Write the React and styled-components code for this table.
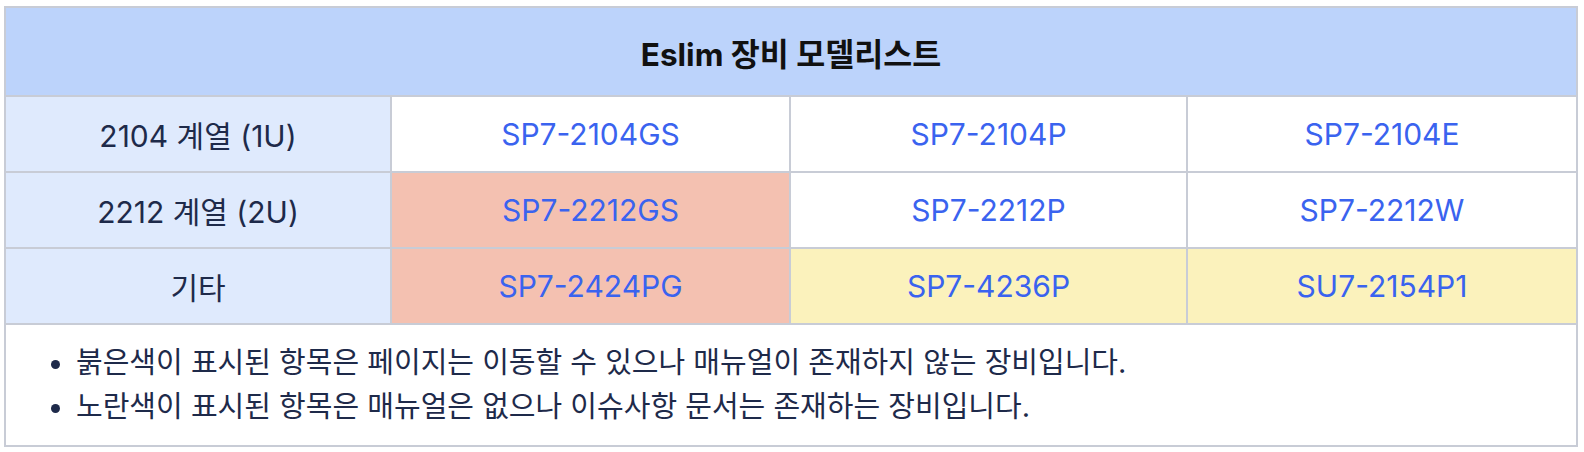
import React from "react";
import styled, { createGlobalStyle } from "styled-components";

const GlobalStyle = createGlobalStyle`
  body {
    margin: 0;
    background: #fff;
    font-family: Inter, "Noto Sans CJK KR", sans-serif;
    color: #1e2a4a;
  }
`;

const Page = styled.div`
  padding: 6px 0 0 4px;
`;

const Table = styled.table`
  width: 1572px;
  border-collapse: collapse;
  table-layout: fixed;
  border: 2px solid #c8ccd6;
`;

const Th = styled.th`
  height: 87px;
  padding: 0;
  background: #bcd3fb;
  font-size: 31.5px;
  font-weight: 700;
  color: #111;
  text-align: center;
  border: 2px solid #c8ccd6;
`;

const bgs = {
  label: "#dfeafd",
  red: "#f4c1b1",
  yellow: "#fbf2bc",
  plain: "#fff",
};

const Td = styled.td`
  height: 74px;
  padding: 0;
  text-align: center;
  font-size: 30px;
  border: 2px solid #c8ccd6;
  background: ${(p) => bgs[p.$tone || "plain"]};
  color: ${(p) => (p.$tone === "label" ? "#1e2a4a" : "#3a63ef")};
`;

const ModelLink = styled.a`
  color: inherit;
  text-decoration: none;
`;

const NoteCell = styled.td`
  height: 120px;
  padding: 0 0 0 46px;
  border: 2px solid #c8ccd6;
`;

const NoteList = styled.ul`
  margin: 0;
  padding: 0 0 0 24px;
  font-size: 29px;
  line-height: 44px;
  color: #1e2a4a;
`;

const rows = [
  { label: "2104 계열 (1U)", items: [["SP7-2104GS"], ["SP7-2104P"], ["SP7-2104E"]] },
  { label: "2212 계열 (2U)", items: [["SP7-2212GS", "red"], ["SP7-2212P"], ["SP7-2212W"]] },
  { label: "기타", items: [["SP7-2424PG", "red"], ["SP7-4236P", "yellow"], ["SU7-2154P1", "yellow"]] },
];

export default function App() {
  return (
    <Page>
      <GlobalStyle />
      <Table>
        <colgroup>
          <col style={{ width: 386 }} />
          <col style={{ width: 399 }} />
          <col style={{ width: 397 }} />
          <col style={{ width: 390 }} />
        </colgroup>
        <thead>
          <tr>
            <Th colSpan={4}>Eslim 장비 모델리스트</Th>
          </tr>
        </thead>
        <tbody>
          {rows.map((r) => (
            <tr key={r.label}>
              <Td $tone="label">{r.label}</Td>
              {r.items.map(([name, tone]) => (
                <Td key={name} $tone={tone}>
                  <ModelLink href="#">{name}</ModelLink>
                </Td>
              ))}
            </tr>
          ))}
          <tr>
            <NoteCell colSpan={4}>
              <NoteList>
                <li>붉은색이 표시된 항목은 페이지는 이동할 수 있으나 매뉴얼이 존재하지 않는 장비입니다.</li>
                <li>노란색이 표시된 항목은 매뉴얼은 없으나 이슈사항 문서는 존재하는 장비입니다.</li>
              </NoteList>
            </NoteCell>
          </tr>
        </tbody>
      </Table>
    </Page>
  );
}
